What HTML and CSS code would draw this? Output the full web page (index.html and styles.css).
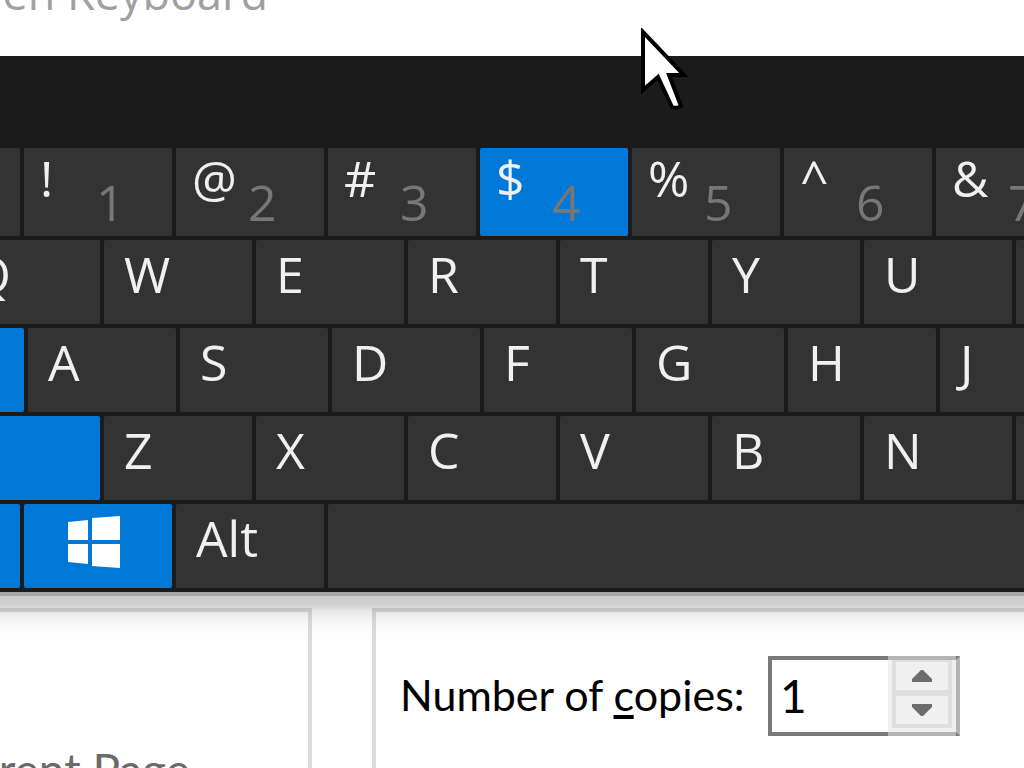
FILE: index.html
```html
<!DOCTYPE html>
<html lang="en">
<head>
  <meta charset="UTF-8">
  <meta name="viewport" content="width=device-width, initial-scale=1.0">
  <title>On-Screen Keyboard</title>
  <link rel="stylesheet" href="styles.css">
</head>
<body>
  <header class="titlebar">
    <h1>On-Screen Keyboard</h1>
  </header>

  <main class="keyboard">
    <div class="row row-numbers">
      <button class="key" aria-label="Backquote"></button>
      <button class="key"><span class="shift">!</span><span class="digit">1</span></button>
      <button class="key"><span class="shift">@</span><span class="digit">2</span></button>
      <button class="key"><span class="shift">#</span><span class="digit">3</span></button>
      <button class="key active"><span class="shift">$</span><span class="digit">4</span></button>
      <button class="key"><span class="shift">%</span><span class="digit">5</span></button>
      <button class="key"><span class="shift">^</span><span class="digit">6</span></button>
      <button class="key"><span class="shift">&amp;</span><span class="digit">7</span></button>
    </div>
    <div class="row row-top">
      <button class="key">Q</button>
      <button class="key">W</button>
      <button class="key">E</button>
      <button class="key">R</button>
      <button class="key">T</button>
      <button class="key">Y</button>
      <button class="key">U</button>
      <button class="key" aria-label="I"></button>
    </div>
    <div class="row row-home">
      <button class="key active" aria-label="Caps"></button>
      <button class="key">A</button>
      <button class="key">S</button>
      <button class="key">D</button>
      <button class="key">F</button>
      <button class="key">G</button>
      <button class="key">H</button>
      <button class="key">J</button>
    </div>
    <div class="row row-bottom">
      <button class="key active" aria-label="Shift"></button>
      <button class="key">Z</button>
      <button class="key">X</button>
      <button class="key">C</button>
      <button class="key">V</button>
      <button class="key">B</button>
      <button class="key">N</button>
      <button class="key" aria-label="M"></button>
    </div>
    <div class="row row-space">
      <button class="key active" aria-label="Ctrl"></button>
      <button class="key active key-win" aria-label="Windows">
        <svg width="52" height="52" viewBox="0 0 52 52" fill="#fff">
          <path d="M0 6L20 4V24H0zM24 2L52 0V24H24zM0 28H20V48L0 46zM24 28H52V52L24 50z"/>
        </svg>
      </button>
      <button class="key">Alt</button>
      <button class="key key-space" aria-label="Space"></button>
    </div>
  </main>

  <section class="print">
    <div class="group group-range">
      <span class="range-label">Current Page</span>
    </div>
    <div class="group group-copies">
      <label for="copies">Number of <u>c</u>opies:</label>
      <div class="spinner">
        <input type="text" id="copies" value="1">
        <div class="spin-buttons">
          <button aria-label="Increase"><svg width="20" height="12" viewBox="0 0 20 12"><path d="M9 0H11L20 9V12H0V9z"/></svg></button>
          <button aria-label="Decrease"><svg width="20" height="12" viewBox="0 0 20 12"><path d="M0 0H20V3L11 12H9L0 3z"/></svg></button>
        </div>
      </div>
    </div>
  </section>

  <svg class="pointer" width="50" height="84" viewBox="0 0 50 84">
    <path d="M3 4V62L18 49L32 79Q37 81 41 78L29 47H44z" fill="#fff" stroke="#000" stroke-width="4"/>
  </svg>
</body>
</html>
```
FILE: styles.css
```css
* {
  box-sizing: border-box;
}
body {
  margin: 0;
  height: 100vh;
  overflow: hidden;
  display: flex;
  flex-direction: column;
  background-color: #fff;
  font-family: "Open Sans", "Noto Sans", sans-serif;
}
button {
  border: none;
  padding: 0;
  font-family: inherit;
}
.titlebar {
  flex: none;
  width: 268px;
  height: 56px;
  padding-bottom: 32px;
  display: flex;
  align-items: flex-end;
  justify-content: flex-end;
}
h1 {
  margin: 0;
  font-size: 45px;
  line-height: 62px;
  font-weight: 500;
  color: #a0a0a0;
  white-space: nowrap;
}

/* keyboard */
.keyboard {
  position: relative;
  flex: none;
  display: flex;
  flex-direction: column;
  gap: 4px;
  padding: 92px 0 4px;
  background-color: #1b1b1b;
}
.keyboard::after {
  content: "";
  position: absolute;
  top: 100%;
  left: 0;
  right: 0;
  height: 60px;
  pointer-events: none;
  background: linear-gradient(rgba(0,0,0,0.34) 4px, rgba(0,0,0,0.2) 4px, rgba(0,0,0,0.18) 12px, rgba(0,0,0,0.09) 20px, rgba(0,0,0,0.04) 28px, rgba(0,0,0,0.01) 38px, transparent);
}
.row {
  display: flex;
  gap: 4px;
  height: 84px;
}
.row-numbers {
  height: 88px;
}
.row-numbers, .row-space {
  margin-left: -128px;
}
.row-top, .row-bottom {
  margin-left: -48px;
}
.row-home {
  margin-left: -124px;
}
.key {
  flex: none;
  width: 148px;
  display: flex;
  align-items: flex-start;
  padding: 0 20px;
  border-radius: 2px;
  background-color: #333;
  color: #f0f0f0;
  font-size: 50px;
  font-weight: 500;
  line-height: 68px;
  text-align: left;
}
.key.active {
  background-color: #0078d7;
}
.row-numbers .key {
  padding: 0 16px;
  line-height: 60px;
}
.shift {
  flex: none;
  width: 56px;
}
.digit {
  padding-top: 24px;
  color: #777;
}
.key-win {
  justify-content: center;
  padding: 12px 0 0;
}
.key-win svg {
  margin-right: 8px;
}
.key-space {
  flex: 1;
}

/* print dialog */
.print {
  flex: 1;
  min-height: 0;
  overflow: hidden;
  display: flex;
  gap: 60px;
  padding-top: 16px;
  font-family: Lato, "Open Sans", sans-serif;
  font-size: 46px;
  line-height: 60px;
}
.group {
  border: 4px solid #dcdcdc;
  border-bottom: none;
}
.group-range {
  width: 312px;
  border-left: none;
  padding: 128px 118px 0 0;
  display: flex;
  justify-content: flex-end;
  color: #6a6a6a;
  white-space: nowrap;
}
.group-copies {
  flex: 1;
  border-right: none;
  padding: 44px 0 0 24px;
  display: flex;
  align-items: flex-start;
}
.group-copies label {
  flex: none;
  width: 368px;
  font-size: 43px;
  line-height: 78px;
  color: #000;
  white-space: nowrap;
}
u {
  text-decoration-thickness: 4px;
  text-underline-offset: 4px;
}
.spinner {
  display: flex;
  width: 192px;
  height: 80px;
  border: 4px solid #7a7a7a;
  border-right-color: #b4b4b6;
}
.spinner input {
  flex: 1;
  min-width: 0;
  border: none;
  outline: none;
  padding: 0 8px;
  background: #fff;
  color: #000;
  font: inherit;
}
.spin-buttons {
  flex: none;
  width: 68px;
  margin: -4px 0;
  padding: 0 4px 4px;
  border: solid #b4b4b6;
  border-width: 4px 0;
  background-color: #f0f0f1;
  display: flex;
  flex-direction: column;
}
.spin-buttons button {
  flex: 1;
  display: flex;
  align-items: center;
  justify-content: center;
  border: 4px solid #dededf;
  border-top-width: 2px;
  background-color: #f0f0f1;
}
.spin-buttons path {
  fill: #6c6c6c;
}

.pointer {
  position: absolute;
  top: 28px;
  left: 640px;
}
```
